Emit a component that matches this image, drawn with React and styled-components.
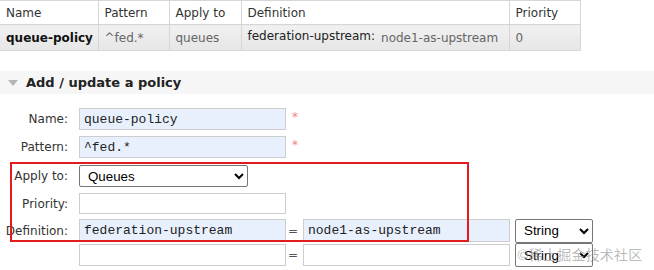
import React from 'react';
import styled, { createGlobalStyle } from 'styled-components';

const GlobalStyle = createGlobalStyle`
  body {
    margin: 0;
    background: #fff;
    font-family: "DejaVu Sans", Verdana, sans-serif;
    font-size: 12px;
    color: #484848;
  }
`;

const Page = styled.div`
  position: relative;
  width: 654px;
  height: 270px;
  overflow: hidden;
`;

const Table = styled.table`
  border-collapse: collapse;
  table-layout: fixed;
  width: 580px;
`;

const Col = styled.col`
  width: ${p => p.w}px;
`;

const Th = styled.th`
  height: 23px;
  padding: 0 6px;
  text-align: left;
  font-weight: normal;
  color: #333;
  background: #fff;
  border: 1px solid #d6d6d6;
  border-left: ${p => (p.first ? 'none' : '1px solid #d6d6d6')};
  white-space: nowrap;
`;

const Td = styled.td`
  height: 25px;
  padding: 0 6px;
  color: ${p => (p.strong ? '#111' : '#666')};
  font-weight: ${p => (p.strong ? 'bold' : 'normal')};
  background: linear-gradient(#f1f1f1, #e6e6e6);
  border: 1px solid #d6d6d6;
  border-left: ${p => (p.first ? 'none' : '1px solid #d6d6d6')};
  white-space: nowrap;
`;

const DefKey = styled.span`
  color: #222;
  position: relative;
  top: -2px;
  margin-right: 6px;
`;

const DefVal = styled.span`
  color: #666;
`;

const Section = styled.div`
  margin-top: 20px;
  height: 23px;
  display: flex;
  align-items: center;
  gap: 8px;
  padding-left: 8px;
  background: #f6f6f6;
`;

const Arrow = styled.span`
  width: 0;
  height: 0;
  border-left: 5px solid transparent;
  border-right: 5px solid transparent;
  border-top: 6px solid #b5b5b5;
`;

const SectionTitle = styled.h2`
  margin: 0;
  font-size: 13px;
  font-weight: bold;
  color: #222;
`;

const Form = styled.div`
  margin-top: 14px;
  display: flex;
  flex-direction: column;
`;

const Row = styled.div`
  display: flex;
  align-items: center;
  height: ${p => p.h}px;
  margin-bottom: ${p => p.gap || 0}px;
`;

const Label = styled.label`
  width: 68px;
  margin-right: 11px;
  text-align: right;
  color: #333;
  font-size: 12px;
`;

const Input = styled.input`
  box-sizing: border-box;
  width: 207px;
  height: ${p => p.h || 22}px;
  margin: 0;
  padding: 0 4px;
  border: 1px solid #cdcdcd;
  background: ${p => (p.filled ? '#e8f0fe' : '#fff')};
  font-family: "Liberation Mono", "Courier New", monospace;
  font-size: 13px;
  color: #222;
  outline: none;
`;

const Star = styled.span`
  margin-left: 6px;
  color: #f08585;
  font-size: 12px;
  align-self: flex-start;
  margin-top: 2px;
`;

const Eq = styled.span`
  box-sizing: border-box;
  width: 17px;
  padding-left: 2px;
  color: #555;
  font-size: 12px;
`;

const Select = styled.select`
  box-sizing: border-box;
  width: ${p => p.w}px;
  height: ${p => p.h || 23}px;
  margin: 0 0 0 ${p => p.ml || 0}px;
  font-family: "Liberation Sans", Arial, sans-serif;
  font-size: 13.33px;
  color: #000;
  background: #fff;
  border: 1px solid #767676;
  border-radius: 2px;
  padding: 0 4px;
`;

const Mark = styled.div`
  position: absolute;
  left: 10px;
  top: 162px;
  width: 455px;
  height: 76px;
  border: 2px solid #e31b1b;
  pointer-events: none;
`;

const Watermark = styled.div`
  position: absolute;
  left: 517px;
  top: 244px;
  font-family: "Noto Sans CJK SC", sans-serif;
  font-size: 14px;
  color: rgba(140, 140, 140, 0.6);
  letter-spacing: 0.2px;
  pointer-events: none;
`;

const stringTypes = (
  <>
    <option value="string">String</option>
    <option value="number">Number</option>
    <option value="boolean">Boolean</option>
    <option value="list">List</option>
  </>
);

export default function App() {
  return (
    <Page>
      <GlobalStyle />
      <Table>
        <colgroup>
          <Col w={98} />
          <Col w={71} />
          <Col w={72} />
          <Col w={268} />
          <Col w={71} />
        </colgroup>
        <thead>
          <tr>
            <Th first>Name</Th>
            <Th>Pattern</Th>
            <Th>Apply to</Th>
            <Th>Definition</Th>
            <Th>Priority</Th>
          </tr>
        </thead>
        <tbody>
          <tr>
            <Td strong first>queue-policy</Td>
            <Td>^fed.*</Td>
            <Td>queues</Td>
            <Td>
              <DefKey>federation-upstream:</DefKey>
              <DefVal>node1-as-upstream</DefVal>
            </Td>
            <Td>0</Td>
          </tr>
        </tbody>
      </Table>

      <Section>
        <Arrow />
        <SectionTitle>Add / update a policy</SectionTitle>
      </Section>

      <Form>
        <Row h={22} gap={6}>
          <Label>Name:</Label>
          <Input filled defaultValue="queue-policy" />
          <Star>*</Star>
        </Row>
        <Row h={22} gap={7}>
          <Label>Pattern:</Label>
          <Input filled defaultValue="^fed.*" />
          <Star>*</Star>
        </Row>
        <Row h={22} gap={6}>
          <Label>Apply to:</Label>
          <Select w={169} h={22} defaultValue="queues">
            <option value="queues">Queues</option>
            <option value="exchanges">Exchanges</option>
            <option value="all">Exchanges and queues</option>
          </Select>
        </Row>
        <Row h={21} gap={5}>
          <Label>Priority:</Label>
          <Input h={21} />
        </Row>
        <Row h={23} gap={2}>
          <Label>Definition:</Label>
          <Input h={23} filled defaultValue="federation-upstream" />
          <Eq>=</Eq>
          <Input h={23} filled defaultValue="node1-as-upstream" />
          <Select w={78} h={24} ml={5} defaultValue="string">
            {stringTypes}
          </Select>
        </Row>
        <Row h={22}>
          <Label />
          <Input />
          <Eq>=</Eq>
          <Input />
          <Select w={78} h={24} ml={5} defaultValue="string">
            {stringTypes}
          </Select>
        </Row>
      </Form>

      <Mark />
      <Watermark>©稀土掘金技术社区</Watermark>
    </Page>
  );
}
